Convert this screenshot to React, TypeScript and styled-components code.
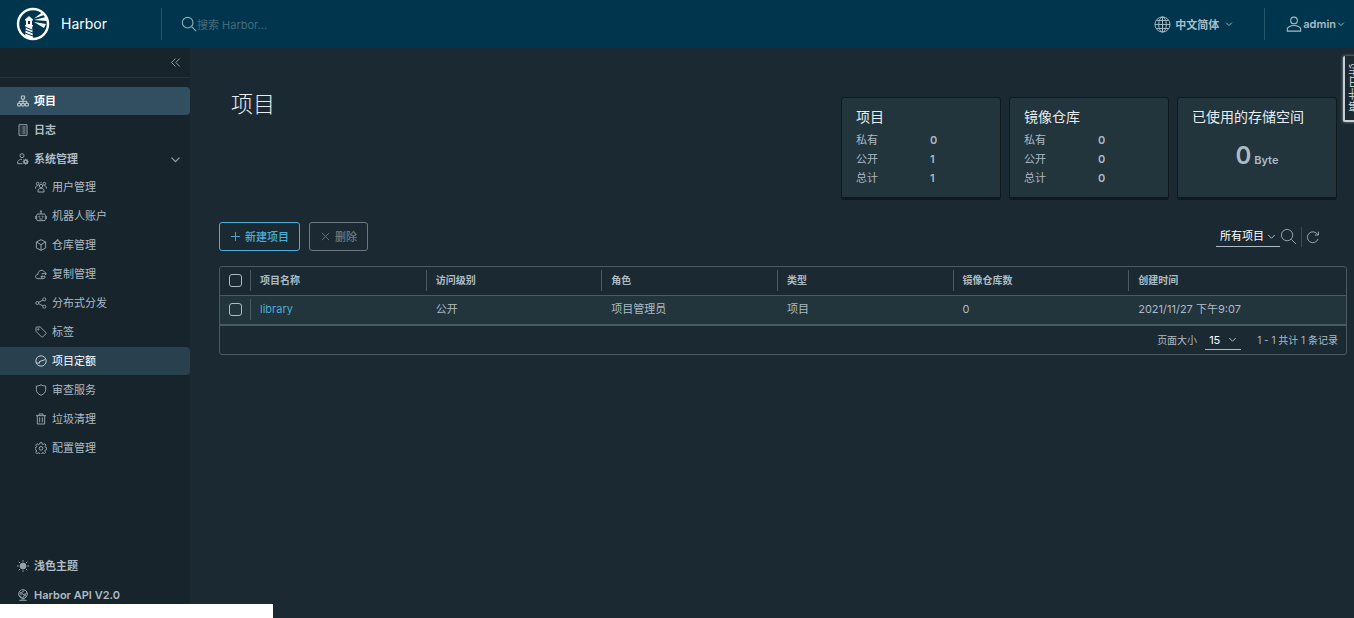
import React from 'react';
import styled, { createGlobalStyle } from 'styled-components';

const GlobalStyle = createGlobalStyle`
  *, *::before, *::after { box-sizing: border-box; }
  body { margin: 0; background: #1b2a32; overflow: hidden; }
  body, button, input, select { font-family: Inter, "Noto Sans CJK SC", sans-serif; }
  button, select { cursor: pointer; }
`;

/* ---------- icons ---------- */

const shapes: Record<string, React.ReactNode> = {
  search: (
    <>
      <circle cx="15" cy="15" r="12" />
      <path d="M24 24l10 10" />
    </>
  ),
  globe: (
    <>
      <circle cx="18" cy="18" r="16" />
      <ellipse cx="18" cy="18" rx="8" ry="16" />
      <path d="M18 2v32M2 18h32M5 9.500h26M5 26.500h26" />
    </>
  ),
  user: (
    <>
      <circle cx="18" cy="10" r="7.500" />
      <path d="M3 34v-6c3-4 8-6.500 15-6.500s12 2.500 15 6.500v6z" />
    </>
  ),
  caret: <path d="M5 12l13 13 13-13" />,
  collapse: <path d="M18 5L5 18l13 13M32 5L19 18l13 13" />,
  projects: (
    <>
      <path d="M13 3h10v9H13zM2 25h9v8H2zM14 25h8v8h-8zM25 25h9v8h-9z" />
      <path d="M18 12v13M6.500 25v-6h23v6" />
    </>
  ),
  logs: (
    <>
      <path d="M6 2h24v32H6z" />
      <path d="M11 9h2M16 9h10M11 15h2M16 15h10M11 21h2M16 21h10M11 27h2M16 27h10" />
    </>
  ),
  admin: (
    <>
      <circle cx="15" cy="8" r="6" />
      <path d="M16 32H2v-6c3-5 7-7 13-7" />
      <circle cx="26" cy="26" r="5" strokeWidth="5" />
      <path d="M26 17v3M26 32v3M17 26h3M32 26h3M19.600 19.600l2 2M30.400 30.400l2 2M32.400 19.600l-2 2M21.600 30.400l-2 2" />
    </>
  ),
  users: (
    <>
      <circle cx="18" cy="15" r="5" />
      <circle cx="8" cy="8" r="4" />
      <circle cx="28" cy="8" r="4" />
      <path d="M9 33v-6c2-4 5-5 9-5s7 1 9 5v6zM2 23v-5c1-3 4-4 8-4M34 23v-5c-1-3-4-4-8-4M18 3v4" />
    </>
  ),
  robot: (
    <>
      <path d="M9 12h18a4 4 0 014 4v12a4 4 0 01-4 4H9a4 4 0 01-4-4V16a4 4 0 014-4zM18 12V5M1 18v9M35 18v9M13 27h10" />
      <circle cx="18" cy="4" r="2" />
      <circle cx="13" cy="20" r="1.500" />
      <circle cx="23" cy="20" r="1.500" />
    </>
  ),
  cube: <path d="M18 2l14 7v18l-14 7-14-7V9zM4 9l14 8 14-8M18 17v17" />,
  replicate: (
    <>
      <path d="M30 26c0 4-2 6-6 6H9c-10 0-9-13 0-13 0-15 17-15 20-6" />
      <path d="M20 17h14M29 12l5 5-5 5M31 26H18M22 22l-4 4 4 4" />
    </>
  ),
  share: (
    <>
      <circle cx="7" cy="18" r="4.500" />
      <circle cx="28" cy="7" r="4.500" />
      <circle cx="28" cy="29" r="4.500" />
      <path d="M11 16l13-7M11 20l13 7" />
    </>
  ),
  tag: (
    <>
      <path d="M3 5v11l17 17a2 2 0 003 0l10-10a2 2 0 000-3L16 3H5a2 2 0 00-2 2z" />
      <circle cx="10" cy="10" r="2" />
    </>
  ),
  quota: (
    <>
      <circle cx="18" cy="18" r="15.500" />
      <path d="M4 24h7l4-5 15-5M15 19l-3 7" />
    </>
  ),
  shield: <path d="M18 2c4 3 8 4 14 4v11c0 8-5 13-14 17C9 30 4 25 4 17V6c6 0 10-1 14-4z" />,
  trash: <path d="M3 8h30M12 8V3h12v5M7 8v25h22V8M14 13v15M22 13v15" />,
  gear: (
    <>
      <path d="M15 2h6l1 5 3 1 4-3 4 4-3 5 1 2 4 1v6l-4 1-2 3 3 4-4 4-4-3-3 1-1 4h-6l-1-4-3-1-4 3-4-4 3-4-1-3-4-1v-6l4-1 1-3-3-4 4-4 4 3 3-1z" />
      <circle cx="18" cy="19" r="5.500" />
    </>
  ),
  sun: (
    <>
      <circle cx="18" cy="18" r="9" fill="currentColor" />
      <path d="M18 0v5M18 31v5M0 18h5M31 18h5M5 5l4 4M27 27l4 4M31 5l-4 4M9 27l-4 4" />
    </>
  ),
  api: (
    <>
      <circle cx="18" cy="15" r="13" />
      <circle cx="12" cy="13" r="3" />
      <circle cx="24" cy="18" r="3" />
      <path d="M15 14l6 3M14 10l8-5M7 19l9 8M22 20l-5 7M26 15l3-5M7 34h22M13 30h10" />
    </>
  ),
  plus: <path d="M18 3v30M3 18h30" />,
  times: <path d="M6 6l24 24M30 6L6 30" />,
  refresh: <path d="M31 23a14 14 0 11-1-11M32 4v9h-9" />,
};

const Svg = styled.svg`
  flex: none;
  display: block;
  fill: none;
  stroke: currentColor;
`;

const Icon = ({ name, size = 12, weight = 3 }: { name: string; size?: number; weight?: number }) => (
  <Svg width={size} height={size} viewBox="0 0 36 36" strokeWidth={weight} aria-hidden="true">
    {shapes[name]}
  </Svg>
);

const Logo = () => (
  <svg width="34" height="34" viewBox="0 0 34 34" aria-hidden="true">
    <circle cx="17" cy="17" r="15" fill="none" stroke="#fff" strokeWidth="2.400" />
    <path d="M9 12.500l4-3.500 4 3.500v1H9zM10 13h6v5h-6z" fill="#fff" />
    <path d="M12 14h2v3h-2z" fill="#00364d" />
    <path d="M9 18h8v1.500H9zM10 19h6l1 12-4 1-4-2z" fill="#fff" />
    <path d="M9 20l7 3M9 23l8 3M9 26l8 3" stroke="#00364d" strokeWidth="1" />
    <path d="M18 11.500l8-6 2 2.500zM18 13l12-3 1 4zM18 15l12 2-2 4z" fill="#fff" />
  </svg>
);

/* ---------- header ---------- */

const Shell = styled.div`
  position: relative;
  display: flex;
  flex-direction: column;
  min-height: 100vh;
  overflow: hidden;
  color: #adbbc4;
  font-size: 11px;
  line-height: 16px;
`;

const Header = styled.header`
  display: flex;
  align-items: center;
  height: 48px;
  padding: 0 9px 0 16px;
  background: #00364d;
`;

const Brand = styled.a`
  display: flex;
  align-items: center;
  gap: 11px;
  width: 145px;
  color: #fff;
  font-size: 14px;
  text-decoration: none;
`;

const HeaderDivider = styled.span`
  width: 1px;
  height: 32px;
  background: #285568;
`;

const SearchForm = styled.form`
  display: flex;
  flex: 1;
  align-items: center;
  padding-left: 19px;
  color: #93abb6;
`;

const SearchInput = styled.input`
  flex: 1;
  border: 0;
  outline: 0;
  padding: 2px 0 0;
  background: transparent;
  color: #fff;
  font-size: 11px;
  &::placeholder { color: #456b7d; opacity: 1; }
`;

const MenuButton = styled.button<{ $gap: number }>`
  display: flex;
  align-items: center;
  gap: ${({ $gap }) => $gap}px;
  border: 0;
  padding: 0;
  background: none;
  color: #a9bcc5;
  font-size: 11px;
  font-weight: 600;
`;

const MenuLabel = styled.span`
  padding-right: 2px;
`;

const HeaderActions = styled.div`
  display: flex;
  align-items: center;
  gap: 21px;
`;

const LanguageSlot = styled.div`
  padding-right: 10px;
`;

/* ---------- sidebar ---------- */

const Body = styled.div`
  display: flex;
  flex: 1;
`;

const Sidebar = styled.nav`
  display: flex;
  flex-direction: column;
  flex: none;
  width: 190px;
  padding-bottom: 9px;
  background: #17242b;
`;

const CollapseBar = styled.div`
  display: flex;
  justify-content: flex-end;
  height: 30px;
  margin-bottom: 9px;
  padding: 0 9px;
  border-bottom: 1px solid #25333a;
`;

const PlainButton = styled.button`
  display: flex;
  align-items: center;
  border: 0;
  padding: 0;
  background: none;
  color: #9aa9b1;
`;

const NavList = styled.ul<{ $bottom?: boolean }>`
  display: flex;
  flex-direction: column;
  gap: 1px;
  margin: ${({ $bottom }) => ($bottom ? 'auto 0 0' : '0')};
  padding: 0;
  list-style: none;
`;

const NavLink = styled.a<{ $sub?: boolean; $tone?: 'active' | 'hover' }>`
  display: flex;
  align-items: center;
  gap: 5px;
  height: 28px;
  padding: 0 9px 0 ${({ $sub }) => ($sub ? 35 : 17)}px;
  border-radius: ${({ $tone }) => ($tone ? '0 4px 4px 0' : '0')};
  background: ${({ $tone }) => ($tone === 'active' ? '#324f62' : $tone === 'hover' ? '#29404e' : 'none')};
  color: ${({ $tone }) => ($tone ? '#fff' : '#adbbc4')};
  font-weight: ${({ $sub }) => ($sub ? 400 : 600)};
  text-decoration: none;
  svg { color: ${({ $tone }) => ($tone ? '#c3cdd3' : '#93a1a9')}; }
`;

const NavText = styled.span`
  flex: 1;
`;

/* ---------- content ---------- */

const Main = styled.main`
  flex: 1;
  min-width: 0;
  padding: 49px 7px 0 29px;
`;

const Summary = styled.section`
  display: flex;
  justify-content: space-between;
  align-items: flex-start;
  padding: 0 10px 0 12px;
`;

const Title = styled.h1`
  margin: 0;
  color: #e9ecef;
  font-size: 22px;
  font-weight: 300;
  line-height: 14px;
`;

const Cards = styled.div`
  display: flex;
  gap: 8px;
`;

const Card = styled.section`
  width: 160px;
  height: 103px;
  padding: 9px 14px;
  border: 1px solid #10191e;
  border-bottom-width: 3px;
  border-radius: 3px;
  background: #22343c;
`;

const CardTitle = styled.h2`
  margin: 0 0 4px;
  color: #e9ecef;
  font-size: 14px;
  font-weight: 400;
  line-height: 20px;
  white-space: nowrap;
`;

const Counts = styled.dl`
  display: grid;
  grid-template-columns: 74px 1fr;
  margin: 0;
  line-height: 19px;
  dt, dd { margin: 0; }
  dd { font-weight: 600; }
`;

const Storage = styled.p`
  margin: 15px 0 0;
  text-align: center;
  font-weight: 600;
  line-height: 28px;
`;

const StorageValue = styled.span`
  font-size: 24px;
`;

const Toolbar = styled.div`
  display: flex;
  align-items: center;
  justify-content: space-between;
  margin: 22px 0 15px;
`;

const Group = styled.div<{ $gap: number }>`
  display: flex;
  align-items: center;
  gap: ${({ $gap }) => $gap}px;
`;

const ActionButton = styled.button`
  display: flex;
  align-items: center;
  gap: 4px;
  height: 29px;
  padding: 0 10px;
  border: 1px solid #49afd9;
  border-radius: 3px;
  background: none;
  color: #49afd9;
  font-size: 11px;
  line-height: 16px;
  font-weight: 500;
  &:disabled { border-color: #6d787e; color: #6d787e; cursor: default; }
`;

const SelectBox = styled.span<{ $width: number }>`
  display: flex;
  align-items: center;
  width: ${({ $width }) => $width}px;
  height: 20px;
  padding: 0 4px;
  border-bottom: 1px solid #adbbc4;
`;

const Select = styled.select`
  flex: 1;
  min-width: 0;
  border: 0;
  padding: 0;
  outline: 0;
  appearance: none;
  background: transparent;
  color: #fff;
  font-size: 11px;
`;

const Filters = styled(Group)`
  padding-right: 27px;
  button + button { margin-left: 4px; padding-left: 4px; border-left: 1px solid #3e4c54; height: 20px; }
`;

const Grid = styled.div`
  border: 1px solid #495a64;
  border-radius: 3px;
`;

const Table = styled.table`
  width: 100%;
  table-layout: fixed;
  border-collapse: collapse;
  th, td { padding: 0; text-align: left; }
  th { height: 28px; font-size: 10px; font-weight: 600; }
  td { height: 30px; }
  tbody tr { background: #22343c; border-top: 1px solid #495a64; border-bottom: 2px solid #495a64; }
`;

const CheckCol = styled.col`
  width: 30px;
`;

const DataCol = styled.col`
  width: 15.6%;
`;

const Cell = styled.div<{ $line?: boolean }>`
  display: flex;
  align-items: center;
  height: 21px;
  padding: 0 0 2px 9px;
  border-left: 1px solid ${({ $line }) => ($line ? '#495a64' : 'transparent')};
  a { color: #49afd9; text-decoration: none; }
`;

const Checkbox = styled.input`
  display: block;
  appearance: none;
  width: 13px;
  height: 13px;
  margin: 0 0 0 9px;
  border: 1px solid #adbbc4;
  border-radius: 3px;
`;

const Footer = styled.div`
  display: flex;
  align-items: center;
  justify-content: flex-end;
  height: 28px;
  padding-right: 8px;
  font-size: 10px;
`;

const PageSize = styled.label`
  display: flex;
  align-items: center;
  gap: 8px;
  margin-right: 16px;
`;

/* ---------- overlays ---------- */

const EventTab = styled.button`
  position: absolute;
  top: 56px;
  right: -12px;
  width: 23px;
  height: 66px;
  padding: 0;
  border: 2px solid #c9cdd0;
  border-left-width: 0;
  border-bottom-width: 0;
  border-radius: 2px;
  box-shadow: 0 0 3px #9aa3a8;
  background: #1b2a32;
  color: #c3cdd3;
  font-size: 12px;
  line-height: 14px;
  writing-mode: vertical-rl;
  transform: rotate(180deg);
`;

const StatusBubble = styled.div`
  position: absolute;
  bottom: 0;
  left: 0;
  width: 273px;
  height: 14px;
  background: #fff;
`;

const subItems = [
  ['users', '用户管理'],
  ['robot', '机器人账户'],
  ['cube', '仓库管理'],
  ['replicate', '复制管理'],
  ['share', '分布式分发'],
  ['tag', '标签'],
  ['quota', '项目定额'],
  ['shield', '审查服务'],
  ['trash', '垃圾清理'],
  ['gear', '配置管理'],
];

const columns = ['项目名称', '访问级别', '角色', '类型', '镜像仓库数', '创建时间'];
const rowCells = ['公开', '项目管理员', '项目', '0', '2021/11/27 下午9:07'];

const CountCard = ({ title, values }: { title: string; values: number[] }) => (
  <Card>
    <CardTitle>{title}</CardTitle>
    <Counts>
      {['私有', '公开', '总计'].map((label, i) => (
        <React.Fragment key={label}>
          <dt>{label}</dt>
          <dd>{values[i]}</dd>
        </React.Fragment>
      ))}
    </Counts>
  </Card>
);

export default function App() {
  return (
    <>
      <GlobalStyle />
      <Shell>
        <Header>
          <Brand href="#">
            <Logo />
            Harbor
          </Brand>
          <HeaderDivider />
          <SearchForm role="search">
            <Icon name="search" size={16} weight={2.5} />
            <SearchInput type="text" placeholder="搜索 Harbor..." aria-label="搜索" />
          </SearchForm>
          <HeaderActions>
            <LanguageSlot>
              <MenuButton type="button" $gap={4}>
                <Icon name="globe" size={17} weight={2} />
                <MenuLabel>中文简体</MenuLabel>
                <Icon name="caret" size={8} weight={4} />
              </MenuButton>
            </LanguageSlot>
            <HeaderDivider />
            <MenuButton type="button" $gap={1}>
              <Icon name="user" size={16} weight={2.5} />
              admin
              <Icon name="caret" size={8} weight={4} />
            </MenuButton>
          </HeaderActions>
        </Header>

        <Body>
          <Sidebar>
            <CollapseBar>
              <PlainButton type="button" aria-label="收起">
                <Icon name="collapse" size={11} />
              </PlainButton>
            </CollapseBar>
            <NavList>
              <li>
                <NavLink href="#" $tone="active">
                  <Icon name="projects" />
                  <NavText>项目</NavText>
                </NavLink>
              </li>
              <li>
                <NavLink href="#">
                  <Icon name="logs" />
                  <NavText>日志</NavText>
                </NavLink>
              </li>
              <li>
                <NavLink href="#">
                  <Icon name="admin" />
                  <NavText>系统管理</NavText>
                  <Icon name="caret" size={11} weight={4} />
                </NavLink>
                <NavList>
                  {subItems.map(([icon, label]) => (
                    <li key={label}>
                      <NavLink href="#" $sub $tone={icon === 'quota' ? 'hover' : undefined}>
                        <Icon name={icon} />
                        <NavText>{label}</NavText>
                      </NavLink>
                    </li>
                  ))}
                </NavList>
              </li>
            </NavList>
            <NavList $bottom>
              <li>
                <NavLink href="#">
                  <Icon name="sun" />
                  <NavText>浅色主题</NavText>
                </NavLink>
              </li>
              <li>
                <NavLink href="#">
                  <Icon name="api" />
                  <NavText>Harbor API V2.0</NavText>
                </NavLink>
              </li>
            </NavList>
          </Sidebar>

          <Main>
            <Summary>
              <Title>项目</Title>
              <Cards>
                <CountCard title="项目" values={[0, 1, 1]} />
                <CountCard title="镜像仓库" values={[0, 0, 0]} />
                <Card>
                  <CardTitle>已使用的存储空间</CardTitle>
                  <Storage>
                    <StorageValue>0</StorageValue> Byte
                  </Storage>
                </Card>
              </Cards>
            </Summary>

            <Toolbar>
              <Group $gap={9}>
                <ActionButton type="button">
                  <Icon name="plus" size={11} />
                  新建项目
                </ActionButton>
                <ActionButton type="button" disabled>
                  <Icon name="times" size={11} />
                  删除
                </ActionButton>
              </Group>
              <Filters $gap={0}>
                <SelectBox $width={64}>
                  <Select aria-label="项目筛选">
                    <option>所有项目</option>
                  </Select>
                  <Icon name="caret" size={9} weight={4} />
                </SelectBox>
                <PlainButton type="button" aria-label="搜索">
                  <Icon name="search" size={17} weight={2} />
                </PlainButton>
                <PlainButton type="button" aria-label="刷新">
                  <Icon name="refresh" size={14} weight={2.5} />
                </PlainButton>
              </Filters>
            </Toolbar>

            <Grid>
              <Table>
                <colgroup>
                  <CheckCol />
                  {columns.slice(1).map((c) => (
                    <DataCol key={c} />
                  ))}
                  <col />
                </colgroup>
                <thead>
                  <tr>
                    <th>
                      <Checkbox type="checkbox" aria-label="全选" />
                    </th>
                    {columns.map((c) => (
                      <th key={c}>
                        <Cell $line>{c}</Cell>
                      </th>
                    ))}
                  </tr>
                </thead>
                <tbody>
                  <tr>
                    <td>
                      <Checkbox type="checkbox" aria-label="选择 library" />
                    </td>
                    <td>
                      <Cell $line>
                        <a href="#">library</a>
                      </Cell>
                    </td>
                    {rowCells.map((c, i) => (
                      <td key={i}>
                        <Cell>{c}</Cell>
                      </td>
                    ))}
                  </tr>
                </tbody>
              </Table>
              <Footer>
                <PageSize>
                  页面大小
                  <SelectBox $width={36}>
                    <Select>
                      <option>15</option>
                    </Select>
                    <Icon name="caret" size={9} weight={4} />
                  </SelectBox>
                </PageSize>
                <span>1 - 1 共计 1 条记录</span>
              </Footer>
            </Grid>
          </Main>
        </Body>

        <EventTab type="button">事件日志</EventTab>
        <StatusBubble />
      </Shell>
    </>
  );
}
